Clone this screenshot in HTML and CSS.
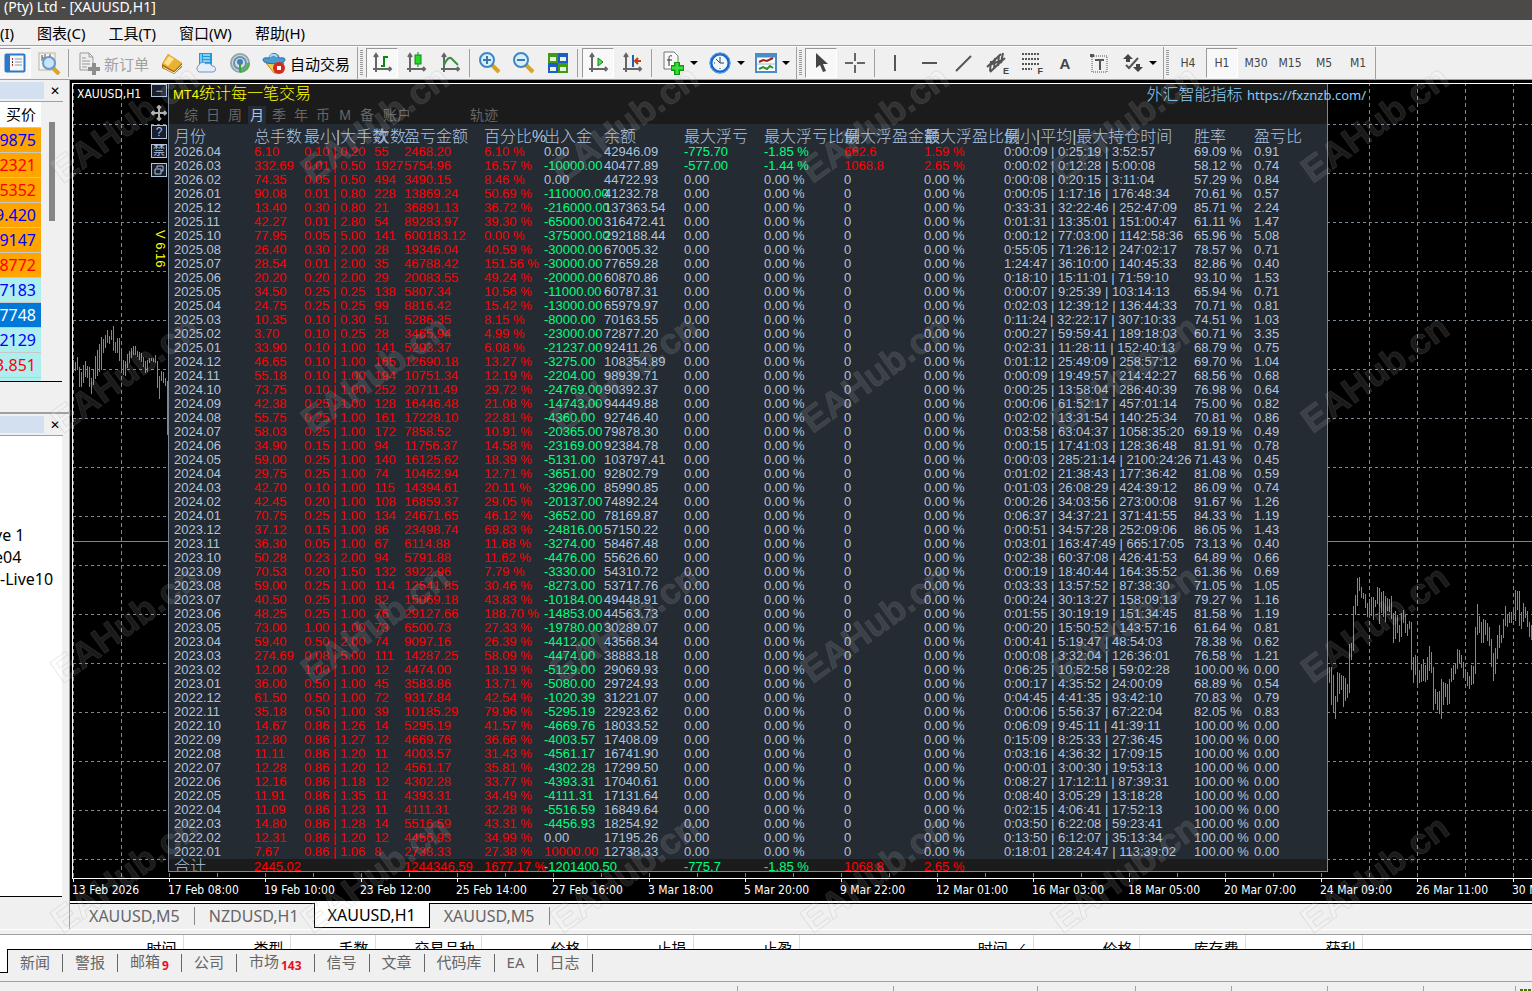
FILE: index.html
```html
<!DOCTYPE html>
<html lang="zh-CN">
<head>
  <meta charset="UTF-8" />
  <meta name="viewport" content="width=device-width, initial-scale=1.0"/>
  <title>(Pty) Ltd - [XAUUSD,H1]</title>
  <link rel="stylesheet" href="styles.css">
</head>
<body>

  <header class="titlebar">(Pty) Ltd - [XAUUSD,H1]</header>

  <nav class="menubar">
    <button>(I)</button>
    <button>图表(C)</button>
    <button>工具(T)</button>
    <button>窗口(W)</button>
    <button>帮助(H)</button>
  </nav>

  <div class="toolbar">
    <!-- standard -->
    <div class="group first">
      <button class="tool pressed" aria-label="导航"><svg width="22" height="22" viewBox="0 0 22 22"><rect x="1.500" y="2.500" width="19" height="17" rx="1" fill="#f4f9ff" stroke="#2f78c4" stroke-width="2"/><rect x="2" y="3" width="4" height="16" fill="#2f78c4"/><path d="M11 7h7M11 10h7M11 13h7" stroke="#999"/><path d="M8 7h1M8 13h1" stroke="#d22" stroke-width="2"/><path d="M8 10h1" stroke="#333" stroke-width="2"/></svg></button>
      <button class="tool" aria-label="数据窗口"><svg width="24" height="24" viewBox="0 0 24 24"><rect x="2" y="2" width="16" height="17" fill="#f6f4ee" stroke="#b9b19e"/><path d="M5 4v6M8 3v4M13 3v5M5 7h9" stroke="#555"/><path d="M16 17l6 6" stroke="#d9a521" stroke-width="4"/><circle cx="12" cy="12" r="6" fill="#c9e3fa" stroke="#6799c9" stroke-width="2"/></svg></button>
      <span class="sep"></span>
      <button class="tool wide order"><svg width="24" height="24" viewBox="0 0 24 24"><path d="M3 2h9l4 4v13H3z" fill="#eee" stroke="#999"/><path d="M12 2v4h4M5 7h4M5 10h8M5 13h8M5 16h5" stroke="#999" fill="none"/><path d="M17 12v12M11 18h12" stroke="#8d8d8d" stroke-width="4"/></svg>新订单</button>
      <button class="tool" aria-label="市场"><svg width="24" height="24" viewBox="0 0 24 24"><path d="M2 13L8 3l14 9v4l-8 7L2 17z" fill="#a66a05"/><path d="M2 13L8 3l14 9-8 8z" fill="#e9b233"/><path d="M4 12l5-7 5 3-6 7z" fill="#ffe391"/><path d="M3 16l11 6 8-8" stroke="#f6edd0" fill="none"/></svg></button>
      <button class="tool" aria-label="云主机"><svg width="24" height="24" viewBox="0 0 24 24"><path d="M5 2h13v13H5z" fill="#1d9ade"/><path d="M9 4h7M9 7h7M9 10h7" stroke="#fff"/><path d="M6 3h2v10H6z" fill="#73cbfa"/><path d="M5 21a4 4 0 0 1 0-7 4 4 0 0 1 7-1 4 4 0 0 1 6 2 3 3 0 0 1 1 6z" fill="#e4eefb" stroke="#7791bd"/></svg></button>
      <button class="tool" aria-label="信号"><svg width="24" height="24" viewBox="0 0 24 24"><circle cx="12" cy="12" r="9" fill="#d4dde0" stroke="#8fa6ae" stroke-width="2"/><circle cx="12" cy="12" r="6" fill="none" stroke="#6b91a7" stroke-width="2"/><path d="M12 22a10 10 0 0 0 10-10h-3a7 7 0 0 1-7 7z" fill="#54b051"/><circle cx="12" cy="11" r="3" fill="#3e7fc0"/><path d="M12 12v9" stroke="#3ca043" stroke-width="2"/></svg></button>
      <button class="tool wide auto"><svg width="24" height="24" viewBox="0 0 24 24"><path d="M4 12h18l-7 10h-3z" fill="#f2cc52" stroke="#b98d1b"/><path d="M1 9c0-3 4-2 6-2 0-6 10-6 10 0 3 0 6-1 6 2 0 5-22 5-22 0z" fill="#4c9bcc" stroke="#2b6f9e"/><path d="M8 6c1-3 6-3 7 0" stroke="#a7dbf4" stroke-width="2" fill="none"/><circle cx="17" cy="17" r="6" fill="#d52b1e"/><rect x="15" y="15" width="4" height="4" fill="#fff"/></svg>自动交易</button>
    </div>

    <!-- charts -->
    <div class="group">
      <button class="tool pressed" aria-label="柱状图"><svg width="22" height="22" viewBox="0 0 22 22"><path class="axis" d="M5 3v17M2 17h18M3 5l2-3 2 3M18 15l2 2-2 2"/><path d="M13 4v11M13 5h4M10 14h3" stroke="#0a8a12" stroke-width="2"/></svg></button>
      <button class="tool" aria-label="蜡烛图"><svg width="22" height="22" viewBox="0 0 22 22"><path class="axis" d="M5 3v17M2 17h18M3 5l2-3 2 3M18 15l2 2-2 2"/><path d="M13 0v15" stroke="#0a8a12"/><rect x="10" y="3" width="6" height="9" fill="#2bd32b" stroke="#0a8a12"/></svg></button>
      <button class="tool" aria-label="折线图"><svg width="22" height="22" viewBox="0 0 22 22"><path class="axis" d="M5 3v17M2 17h18M3 5l2-3 2 3M18 15l2 2-2 2"/><path d="M5 13c4-9 7-8 9-5l5 5" stroke="#3b9140" stroke-width="2" fill="none"/></svg></button>
      <span class="sep"></span>
      <button class="tool" aria-label="放大"><svg width="24" height="24" viewBox="0 0 24 24"><path d="M14 14l7 7" stroke="#d8a520" stroke-width="4"/><circle cx="9" cy="9" r="7" fill="#d8effc" stroke="#3f86c2" stroke-width="2"/><path d="M5 9h8M9 5v8" stroke="#3a78ae" stroke-width="2"/></svg></button>
      <button class="tool" aria-label="缩小"><svg width="24" height="24" viewBox="0 0 24 24"><path d="M14 14l7 7" stroke="#d8a520" stroke-width="4"/><circle cx="9" cy="9" r="7" fill="#d8effc" stroke="#3f86c2" stroke-width="2"/><path d="M5 9h8" stroke="#3a78ae" stroke-width="2"/></svg></button>
      <button class="tool" aria-label="平铺窗口"><svg width="22" height="22" viewBox="0 0 22 22"><path d="M1 1h10v10H1zM11 11h10v10H11z" fill="#3f9a17"/><path d="M11 1h10v10H11zM1 11h10v10H1z" fill="#1e5bc6"/><path d="M3 5h6v4H3zM13 5h6v4h-6zM3 15h6v4H3zM13 15h6v4h-6z" fill="#e8f4dc"/></svg></button>
      <span class="sep"></span>
      <button class="tool pressed" aria-label="自动滚动"><svg width="22" height="22" viewBox="0 0 22 22"><path class="axis" d="M5 3v17M2 17h18M3 5l2-3 2 3M18 15l2 2-2 2"/><path d="M11 6l5 4-5 4z" fill="#58d858" stroke="#0a8a12"/></svg></button>
      <button class="tool" aria-label="图表平移"><svg width="22" height="22" viewBox="0 0 22 22"><path class="axis" d="M5 3v17M2 17h18M3 5l2-3 2 3M18 15l2 2-2 2"/><path d="M12 3v12" stroke="#1a66a8" stroke-width="2"/><path d="M20 9h-6M17 6l-3 3 3 3" stroke="#c23c0e" stroke-width="2" fill="none"/></svg></button>
      <span class="sep"></span>
      <button class="tool drop" aria-label="技术指标"><svg width="24" height="24" viewBox="0 0 24 24"><path d="M3 1h10l4 4v13H3z" fill="#fafafa" stroke="#777"/><path d="M11 5c-3-1-3 1-3 3v7M6 9h5" stroke="#333" fill="none"/><path d="M16 11v13M10 17h13" stroke="#0c9a10" stroke-width="6"/><path d="M16 12v11M11 17h11" stroke="#3be03b" stroke-width="3"/></svg></button>
      <button class="tool drop" aria-label="时间周期"><svg width="24" height="24" viewBox="0 0 24 24"><circle cx="12" cy="12" r="9" fill="#eef7ff" stroke="#1b66c0" stroke-width="3"/><circle cx="12" cy="12" r="10" fill="none" stroke="#4fa2f0"/><path d="M12 6v6h4M12 17v1M6 12h1M8 8l4 4" stroke="#345" fill="none"/></svg></button>
      <button class="tool drop" aria-label="模板"><svg width="22" height="22" viewBox="0 0 22 22"><rect x="1" y="2" width="20" height="18" fill="#fff" stroke="#4a8cc9" stroke-width="2"/><path d="M1 4h20" stroke="#4a8cc9" stroke-width="3"/><path d="M4 10l4-2 4 1 6-3" stroke="#a32014" fill="none" stroke-width="2"/><path d="M2 12h18" stroke="#9bbbd8"/><path d="M4 17l4-2 4 2 3-3 3 2" stroke="#2d9130" fill="none" stroke-width="2"/></svg></button>
    </div>

    <!-- line studies -->
    <div class="group">
      <button class="tool pressed" aria-label="光标"><svg width="22" height="22" viewBox="0 0 22 22"><path d="M6 1v15l4-3 3 7 3-1-3-7h5z" fill="#444"/></svg></button>
      <button class="tool" aria-label="十字准线"><svg width="22" height="22" viewBox="0 0 22 22"><path d="M11 1v8M11 13v8M1 11h8M13 11h8" stroke="#666" stroke-width="2"/></svg></button>
      <span class="sep"></span>
      <button class="tool" aria-label="垂直线"><svg width="22" height="22" viewBox="0 0 22 22"><path d="M11 3v16" stroke="#555" stroke-width="2"/></svg></button>
      <button class="tool" aria-label="水平线"><svg width="22" height="22" viewBox="0 0 22 22"><path d="M4 11h15" stroke="#555" stroke-width="2"/></svg></button>
      <button class="tool" aria-label="趋势线"><svg width="22" height="22" viewBox="0 0 22 22"><path d="M4 19L19 4" stroke="#555" stroke-width="2"/></svg></button>
      <button class="tool letter" aria-label="等距通道"><svg width="22" height="22" viewBox="0 0 22 22"><path d="M1 15L15 2M4 20L19 6M5 9l-1 10M9 6L8 17M13 3l-1 11M17 1l-2 10M3 13l14-5" stroke="#555" stroke-width="2"/></svg><small>E</small></button>
      <button class="tool letter" aria-label="斐波那契"><svg width="22" height="22" viewBox="0 0 22 22"><path d="M2 2h18M2 7h18M2 12h18M2 17h10" stroke="#555" stroke-width="2" stroke-dasharray="2 1"/></svg><small>F</small></button>
      <button class="tool big">A</button>
      <button class="tool" aria-label="文字标签"><svg width="22" height="22" viewBox="0 0 22 22"><rect x="4" y="4" width="15" height="16" fill="none" stroke="#555" stroke-dasharray="1 1"/><path d="M2 2h4v3H2z" fill="#555"/><path d="M7 8h9M12 8v10" stroke="#555" stroke-width="2"/></svg></button>
      <button class="tool drop" aria-label="箭头"><svg width="22" height="22" viewBox="0 0 22 22"><path d="M6 2l5 5H8v3H4V7H1zM16 20l-5-5h3v-3h4v3h3z" fill="#444"/><path d="M4 13l3 3 9-10" stroke="#555" stroke-width="2" fill="none"/></svg></button>
    </div>

    <!-- periods -->
    <div class="group">
      <button class="tool">H4</button>
      <button class="tool pressed">H1</button>
      <button class="tool">M30</button>
      <button class="tool">M15</button>
      <button class="tool">M5</button>
      <button class="tool">M1</button>
    </div>
  </div>

  <main class="workspace">
    <aside class="sidebar">
      <section class="watch">
        <div class="dock-head"><span></span><button aria-label="关闭">✕</button></div>
        <div class="watch-body">
          <table class="quotes">
            <thead><tr><th>买价</th></tr></thead>
            <tbody>
              <tr class="orange up"><td>9875</td></tr>
              <tr class="orange down"><td>2321</td></tr>
              <tr class="orange down"><td>5352</td></tr>
              <tr class="orange up"><td>9.420</td></tr>
              <tr class="orange up"><td>9147</td></tr>
              <tr class="orange down"><td>8772</td></tr>
              <tr class="aqua up"><td>7183</td></tr>
              <tr class="selected"><td>7748</td></tr>
              <tr class="aqua up"><td>2129</td></tr>
              <tr class="aqua down"><td>3.851</td></tr>
              <tr class="aqua"><td></td></tr>
            </tbody>
          </table>
          <div class="scroll-thumb"></div>
        </div>
      </section>
      <section class="navigator">
        <div class="dock-head"><span></span><button aria-label="关闭">✕</button></div>
        <ul class="accounts">
          <li>ve 1</li>
          <li>e04</li>
          <li>-Live10</li>
        </ul>
      </section>
    </aside>

    <section class="chart-side">
      <div class="chart">
        <div class="plot">
          <svg class="plot-svg" aria-hidden="true">
            <defs>
              <pattern id="grid" x="0" y="40" width="48" height="49" patternUnits="userSpaceOnUse">
                <path d="M0 0h3v1H0zM6 0h3v1H6zM12 0h3v1h-3zM18 0h3v1h-3zM24 0h3v1h-3zM30 0h3v1h-3zM36 0h3v1h-3zM42 0h3v1h-3z" fill="#778899"/>
                <path d="M0 0v4h1V0zM0 7v4h1V7zM0 14v4h1v-4zM0 21v4h1v-4zM0 28v4h1v-4zM0 35v4h1v-4zM0 42v4h1v-4z" fill="#778899"/>
              </pattern>
            </defs>
            <rect width="100%" height="100%" fill="url(#grid)"/>
            <rect y="457" width="100%" height="1" fill="#778899"/>
            <path id="bars" stroke="#00e600" shape-rendering="crispEdges"/>
          </svg>
          <span class="symbol">XAUUSD,H1</span>

          <div class="side-buttons">
            <button>−</button>
            <button class="move" aria-label="移动"><svg width="16" height="16" viewBox="0 0 16 16"><path d="M8 1v14M1 8h14M6 3l2-2 2 2M6 13l2 2 2-2M3 6L1 8l2 2M13 6l2 2-2 2" stroke="#b0b0b0" stroke-width="2" fill="none"/></svg></button>
            <button>?</button>
            <button>禁</button>
            <button aria-label="窗口"><svg width="10" height="10" viewBox="0 0 10 10"><path d="M3 3V1h6v5H7M1 4h6v5H1z" stroke="#b0c4de" fill="none"/></svg></button>
          </div>
          <span class="version">V 6.16</span>

          <div class="panel">
            <div class="panel-head">
              <h1><span>MT4</span>统计每一笔交易</h1>
              <div class="modes">
                <button>综</button><button>日</button><button>周</button><button class="active">月</button><button>季</button><button>年</button><button>币</button><button>M</button><button>备</button><button class="account">账户</button><button class="track">轨迹</button>
              </div>
            </div>
            <table class="stats">
              <colgroup>
                <col class="w85"><col class="w50"><col class="w70"><col class="w30"><col class="w80">
                <col class="w60"><col class="w60"><col class="w80"><col class="w80"><col class="w80">
                <col class="w80"><col class="w80"><col class="w190"><col class="w60"><col>
              </colgroup>
              <thead>
                <tr>
                  <th>月份</th><th>总手数</th><th>最小|大手数</th><th>次数</th><th>盈亏金额</th>
                  <th>百分比%</th><th>出入金</th><th>余额</th><th>最大浮亏</th><th>最大浮亏比例</th>
                  <th>最大浮盈金额</th><th>最大浮盈比例</th><th>最小|平均|最大持仓时间</th><th>胜率</th><th>盈亏比</th>
                </tr>
              </thead>
              <tbody id="rows"></tbody>
              <tfoot>
                <tr>
                  <th>合计</th><td class="red">2445.02</td><td></td><td></td><td class="red">1244346.59</td>
                  <td class="red">1677.17 %</td><td class="green">-1201400.50</td><td></td><td class="green">-775.7</td><td class="green">-1.85 %</td>
                  <td class="red">1068.8</td><td class="red">2.65 %</td><td></td><td></td><td></td>
                </tr>
              </tfoot>
            </table>
          </div>
          <div class="brand">外汇智能指标 <a href="https://fxznzb.com/">https://fxznzb.com/</a></div>
        </div>
        <div class="time-axis">
          <span>13 Feb 2026</span><span>17 Feb 08:00</span><span>19 Feb 10:00</span><span>23 Feb 12:00</span>
          <span>25 Feb 14:00</span><span>27 Feb 16:00</span><span>3 Mar 18:00</span><span>5 Mar 20:00</span>
          <span>9 Mar 22:00</span><span>12 Mar 01:00</span><span>16 Mar 03:00</span><span>18 Mar 05:00</span>
          <span>20 Mar 07:00</span><span>24 Mar 09:00</span><span>26 Mar 11:00</span><span>30 Mar 13:00</span>
        </div>
      </div>
      <nav class="chart-tabs">
        <button>XAUUSD,M5</button>
        <button>NZDUSD,H1</button>
        <button class="active">XAUUSD,H1</button>
        <button>XAUUSD,M5</button>
      </nav>
    </section>
  </main>

  <section class="terminal">
    <div class="orders-clip">
      <table class="orders">
        <thead>
          <tr>
            <th class="c182">时间</th><th class="c107">类型</th><th class="c85">手数</th><th class="c106">交易品种</th>
            <th class="c106">价格</th><th class="c106">止损</th><th class="c106">止盈</th><th class="c234 sorted">时间 <i>⁄</i></th>
            <th class="c106">价格</th><th class="c106">库存费</th><th class="c117">获利</th><th></th>
          </tr>
        </thead>
      </table>
    </div>
    <nav class="terminal-tabs">
      <button class="current" aria-label="交易"></button>
      <button>新闻</button>
      <button>警报</button>
      <button>邮箱<b>9</b></button>
      <button>公司</button>
      <button>市场<b>143</b></button>
      <button>信号</button>
      <button>文章</button>
      <button>代码库</button>
      <button>EA</button>
      <button>日志</button>
    </nav>
  </section>

  <footer class="statusbar">
    <span></span><span></span><span></span><span></span><span></span><span></span><span></span><span></span><i></i>
  </footer>

  <svg class="watermark" aria-hidden="true">
    <defs>
      <pattern id="mark" width="250" height="250" patternUnits="userSpaceOnUse">
        <text x="125" y="136" text-anchor="middle" transform="rotate(-36 125 124)">EAHub.cn</text>
      </pattern>
    </defs>
    <rect width="100%" height="100%" fill="url(#mark)"/>
  </svg>

  <script>
    // month, lots, min, max, trades, profit, percent, in/out, balance, hold min, avg, max, win rate, ratio
    const months = `
2026.04 6.10 0.10 0.20 55 2468.20 6.10 0.00 42946.09 0:00:09 0:25:19 3:52:57 69.09 0.91
2026.03 332.69 0.01 0.50 1927 5754.96 16.57 -10000.00 40477.89 0:00:02 0:12:28 5:00:08 58.12 0.74
2026.02 74.35 0.05 0.50 494 3490.15 8.46 0.00 44722.93 0:00:08 0:20:15 3:11:04 57.29 0.84
2026.01 90.08 0.01 0.80 228 13869.24 50.69 -110000.00 41232.78 0:00:05 1:17:16 176:48:34 70.61 0.57
2025.12 13.40 0.30 0.80 21 36891.13 36.72 -216000.00 137363.54 0:33:31 32:22:46 252:47:09 85.71 2.24
2025.11 42.27 0.01 2.80 54 89283.97 39.30 -65000.00 316472.41 0:01:31 13:35:01 151:00:47 61.11 1.47
2025.10 77.95 0.05 5.00 141 600183.12 0.00 -375000.00 292188.44 0:00:12 77:03:00 1142:58:36 65.96 5.08
2025.08 26.40 0.30 2.00 28 19346.04 40.59 -30000.00 67005.32 0:55:05 71:26:12 247:02:17 78.57 0.71
2025.07 28.54 0.01 2.00 35 46788.42 151.56 -30000.00 77659.28 1:24:47 36:10:00 140:45:33 82.86 0.40
2025.06 20.20 0.20 2.00 29 20083.55 49.24 -20000.00 60870.86 0:18:10 15:11:01 71:59:10 93.10 1.53
2025.05 34.50 0.25 0.25 138 5807.34 10.56 -11000.00 60787.31 0:00:07 9:25:39 103:14:13 65.94 0.71
2025.04 24.75 0.25 0.25 99 8816.42 15.42 -13000.00 65979.97 0:02:03 12:39:12 136:44:33 70.71 0.81
2025.03 10.35 0.10 0.30 51 5286.35 8.15 -8000.00 70163.55 0:11:24 32:22:17 307:10:33 74.51 1.03
2025.02 3.70 0.10 0.25 28 3465.94 4.99 -23000.00 72877.20 0:00:27 59:59:41 189:18:03 60.71 3.35
2025.01 33.90 0.10 1.00 141 5293.37 6.08 -21237.00 92411.26 0:02:31 11:28:11 152:40:13 68.79 0.75
2024.12 46.65 0.10 1.00 165 12690.18 13.27 -3275.00 108354.89 0:01:12 25:49:09 258:57:12 69.70 1.04
2024.11 55.18 0.10 1.00 194 10751.34 12.19 -2204.00 98939.71 0:00:09 19:49:57 214:42:27 68.56 0.68
2024.10 73.75 0.10 1.00 252 20711.49 29.72 -24769.00 90392.37 0:00:25 13:58:04 286:40:39 76.98 0.64
2024.09 42.38 0.25 1.00 128 16446.48 21.08 -14743.00 94449.88 0:00:06 61:52:17 457:01:14 75.00 0.82
2024.08 55.75 0.25 1.00 161 17228.10 22.81 -4360.00 92746.40 0:02:02 13:31:54 140:25:34 70.81 0.86
2024.07 58.03 0.25 1.00 172 7858.52 10.91 -20365.00 79878.30 0:03:58 63:04:37 1058:35:20 69.19 0.49
2024.06 34.90 0.15 1.00 94 11756.37 14.58 -23169.00 92384.78 0:00:15 17:41:03 128:36:48 81.91 0.78
2024.05 59.00 0.25 1.00 140 16125.62 18.39 -5131.00 103797.41 0:00:03 285:21:14 2100:24:26 71.43 0.45
2024.04 29.75 0.25 1.00 74 10462.94 12.71 -3651.00 92802.79 0:01:02 21:38:43 177:36:42 81.08 0.59
2024.03 42.70 0.10 1.00 115 14394.61 20.11 -3296.00 85990.85 0:01:03 26:08:29 424:39:12 86.09 0.74
2024.02 42.45 0.20 1.00 108 16859.37 29.05 -20137.00 74892.24 0:00:26 34:03:56 273:00:08 91.67 1.26
2024.01 70.75 0.25 1.00 134 24671.65 46.12 -3652.00 78169.87 0:06:37 34:37:21 371:41:55 84.33 1.19
2023.12 37.12 0.15 1.00 86 23498.74 69.83 -24816.00 57150.22 0:00:51 34:57:28 252:09:06 86.05 1.43
2023.11 36.30 0.05 1.00 67 6114.88 11.68 -3274.00 58467.48 0:03:01 163:47:49 665:17:05 73.13 0.40
2023.10 50.28 0.23 2.00 94 5791.88 11.62 -4476.00 55626.60 0:02:38 60:37:08 426:41:53 64.89 0.66
2023.09 70.53 0.20 1.50 132 3922.96 7.79 -3330.00 54310.72 0:00:19 18:40:44 164:35:52 61.36 0.69
2023.08 59.00 0.25 1.00 114 12541.85 30.46 -8273.00 53717.76 0:03:33 13:57:52 87:38:30 71.05 1.05
2023.07 40.50 0.25 1.00 82 15069.18 43.83 -10184.00 49448.91 0:00:24 30:13:27 158:09:13 79.27 1.16
2023.06 48.25 0.25 1.00 76 29127.66 188.70 -14853.00 44563.73 0:01:55 30:19:19 151:34:45 81.58 1.19
2023.05 73.00 1.00 1.00 73 6500.73 27.33 -19780.00 30289.07 0:00:20 15:50:52 143:57:16 61.64 0.81
2023.04 59.40 0.50 2.00 74 9097.16 26.39 -4412.00 43568.34 0:00:41 5:19:47 48:54:03 78.38 0.62
2023.03 274.69 0.08 5.00 111 14287.25 58.09 -4474.00 38883.18 0:00:08 3:32:04 126:36:01 76.58 1.21
2023.02 12.00 1.00 1.00 12 4474.00 18.19 -5129.00 29069.93 0:06:25 10:52:58 59:02:28 100.00 0.00
2023.01 36.00 0.50 1.00 45 3583.86 13.71 -5080.00 29724.93 0:00:17 4:35:52 24:00:09 68.89 0.54
2022.12 61.50 0.50 1.00 72 9317.84 42.54 -1020.39 31221.07 0:04:45 4:41:35 93:42:10 70.83 0.79
2022.11 35.18 0.50 1.00 39 10185.29 79.96 -5295.19 22923.62 0:00:06 5:56:37 67:22:04 82.05 0.83
2022.10 14.67 0.86 1.26 14 5295.19 41.57 -4669.76 18033.52 0:06:09 9:45:11 41:39:11 100.00 0.00
2022.09 12.80 0.86 1.27 12 4669.76 36.66 -4003.57 17408.09 0:15:09 8:25:33 27:36:45 100.00 0.00
2022.08 11.11 0.86 1.20 11 4003.57 31.43 -4561.17 16741.90 0:03:16 4:36:32 17:09:15 100.00 0.00
2022.07 12.28 0.86 1.20 12 4561.17 35.81 -4302.28 17299.50 0:00:01 3:00:30 19:53:13 100.00 0.00
2022.06 12.16 0.86 1.18 12 4302.28 33.77 -4393.31 17040.61 0:08:27 17:12:11 87:39:31 100.00 0.00
2022.05 11.91 0.86 1.35 11 4393.31 34.49 -4111.31 17131.64 0:08:40 3:05:29 13:18:28 100.00 0.00
2022.04 11.09 0.86 1.23 11 4111.31 32.28 -5516.59 16849.64 0:02:15 4:06:41 17:52:13 100.00 0.00
2022.03 14.80 0.86 1.28 14 5516.59 43.31 -4456.93 18254.92 0:03:50 6:22:08 59:23:41 100.00 0.00
2022.02 12.31 0.86 1.20 12 4456.93 34.99 0.00 17195.26 0:13:50 6:12:07 35:13:34 100.00 0.00
2022.01 7.67 0.86 1.06 8 2738.33 27.38 10000.00 12738.33 0:18:01 28:24:47 113:39:02 100.00 0.00`;

    // floating loss, loss %, floating profit, profit %
    const floating = {
      '2026.04': ['-775.70', '-1.85 %', '662.6', '1.59 %'],
      '2026.03': ['-577.00', '-1.44 %', '1068.8', '2.65 %']
    };

    function color(value) {
      const n = parseFloat(value);
      if (n > 0) return 'red';
      return n < 0 ? 'green' : '';
    }

    const cell = (text, cls = '') => `<td class="${cls}">${text}</td>`;

    document.getElementById('rows').innerHTML = months.trim().split('\n').map(line => {
      const [month, lots, min, max, count, profit, pct, flow, balance, h1, h2, h3, win, ratio] = line.split(' ');
      const extra = floating[month] || ['0.00', '0.00 %', '0', '0.00 %'];
      return '<tr>' + cell(month) + cell(lots, 'red') + cell(`${min} | ${max}`, 'red') + cell(count, 'red') +
        cell(profit, 'red') + cell(pct + ' %', 'red') + cell(flow, color(flow)) + cell(balance) +
        extra.map(v => cell(v, color(v))).join('') +
        cell(`${h1} | ${h2} | ${h3}`) + cell(win + ' %') + cell(ratio) + '</tr>';
    }).join('');

    // high/low pairs, 3 points to a pixel
    const left = [540,575,546,572,531,570,562,621,577,620,556,610,543,592,558,594,560,620,595,641,570,615,528,598,
      510,588,492,575,472,570,477,518,464,505,450,490,468,492,450,480,438,512,487,518,473,518,475,542,513,566,
      540,585,543,588,522,565,512,548,504,535,498,525,498,525,513,530,515,540,520,545,530,562,543,580,540,575,
      534,550,535,543,533,545,525,550,543,625,588,656,574,603,576,610,594,617,603,765];
    const right = [381,430,381,495,405,518,468,536,396,486,399,462,405,450,408,500,414,482,432,474,312,459,309,360,
      198,333,165,224,114,198,111,153,141,174,159,177,162,204,189,231,177,225,171,228,171,240,180,201,141,192,
      144,252,156,219,153,231,168,246,174,213,177,216,168,237,219,309,213,297,225,279,255,306,219,291,210,249,
      225,279,252,288,243,267,246,390,351,430,345,405,354,436,390,430,372,426,357,423,375,426,351,420,318,393,
      336,399,381,510,447,492,456,510,453,522,417,536,426,495,429,471,432,495,417,492,384,426,375,420,369,402,
      327,387,330,369,345,384,366,414,387,420,396,438,408,447,375,435,378,432,261,402,192,285,228,279,246,309,
      237,309,240,285,249,303,261,318,297,381,339,423,324,402,285,357,255,324,285,309,237,294,198,258,225,261,
      216,249,216,249,213,240,150,243,153,210,153,258,216,267,189,246,201,234,213,261,246,291,255,300];

    function bars(points, x, base) {
      let d = '';
      for (let i = 0; i < points.length; i += 2) {
        d += `M${x + i + 0.5} ${base + Math.round(points[i] / 3)}V${base + Math.round(points[i + 1] / 3)}`;
      }
      return d;
    }

    document.getElementById('bars').setAttribute('d', bars(left, 0, 96) + bars(right, 1256, 456));
  </script>

</body>
</html>
```
FILE: styles.css
```css
* {
  box-sizing: border-box;
  margin: 0;
  padding: 0;
}

body {
  display: flex;
  flex-direction: column;
  min-height: 100vh;
  overflow: hidden;
  background: #f0f0f0;
  color: #000;
  font: 15px/20px "Noto Sans", "Noto Sans CJK SC", sans-serif;
}

button {
  background: none;
  border: none;
  color: inherit;
  font: inherit;
  white-space: nowrap;
}

.titlebar {
  height: 20px;
  padding-left: 4px;
  background: #4b4a48;
  color: #fff;
  font-size: 14px;
  line-height: 13px;
}

.menubar {
  display: flex;
  gap: 23px;
  height: 26px;
  border-bottom: 1px solid #a0a0a0;
  line-height: 24px;
}

/* toolbar */
.toolbar {
  display: flex;
  height: 34px;
  border-top: 1px solid #fff;
  border-bottom: 1px solid #a0a0a0;
}

.group {
  position: relative;
  display: flex;
  align-items: center;
  padding-left: 7px;
  border-right: 1px solid #a0a0a0;
}

.group::before {
  content: "";
  position: absolute;
  left: 2px;
  top: 3px;
  bottom: 3px;
  width: 3px;
  background: repeating-linear-gradient(#999 0 1px, #f0f0f0 1px 2px);
}

.group.first {
  width: 360px;
  margin-left: -2px;
  padding-left: 0;
}

.group.first::before {
  display: none;
}

.tool {
  display: flex;
  align-items: center;
  justify-content: center;
  width: 32px;
  height: 30px;
  margin: 0 1px;
  color: #444;
  font: 12px "DejaVu Sans Condensed", sans-serif;
}

.tool svg {
  flex: none;
}

.tool.pressed {
  border: 1px solid #fff;
  border-top-color: #999;
  border-left-color: #999;
  background: #f8f8f8;
}

.tool.wide {
  width: auto;
  gap: 3px;
  font: 15px "Noto Sans CJK SC", sans-serif;
}

.tool.order {
  margin: 0 6px 0 5px;
  color: #a0a0a0;
}

.tool.auto {
  gap: 4px;
  margin-left: 5px;
  color: #000;
}

.tool.big {
  font: bold 15px "Liberation Sans", sans-serif;
}

.tool.drop {
  justify-content: flex-start;
  gap: 5px;
  width: 45px;
  padding-left: 5px;
}

.tool.drop::after {
  content: "";
  border: 4px solid transparent;
  border-top-color: #000;
  border-bottom: 0;
}

.tool.letter {
  position: relative;
}

.tool.letter small {
  position: absolute;
  right: 4px;
  bottom: 2px;
  background: #f0f0f0;
  font: bold 9px/9px "Liberation Sans", sans-serif;
}

.axis {
  fill: none;
  stroke: #666;
  stroke-width: 2;
}

.sep {
  width: 1px;
  height: 28px;
  margin: 0 3px 0 2px;
  background: #a0a0a0;
}

/* sidebar */
.workspace {
  display: flex;
  flex: 1;
}

.sidebar {
  display: flex;
  flex-direction: column;
  width: 70px;
  border-right: 1px solid #a0a0a0;
}

.dock-head {
  display: flex;
  align-items: center;
  gap: 6px;
  height: 22px;
  width: 63px;
  border-bottom: 1px solid #a0a0a0;
}

.dock-head span {
  width: 44px;
  height: 17px;
  background: #d3e0ef;
}

.dock-head button {
  font: bold 12px/12px "DejaVu Sans", sans-serif;
}

.watch {
  height: 334px;
  border-bottom: 2px solid #a0a0a0;
}

.watch-body {
  display: flex;
  width: 62px;
  height: 280px;
  overflow: hidden;
  border-bottom: 1px solid #000;
}

.quotes {
  width: 41px;
  border-collapse: collapse;
  table-layout: fixed;
}

.quotes th,
.quotes td {
  height: 25px;
  padding-right: 5px;
  border-bottom: 1px solid #c8c8c8;
  line-height: 22px;
  text-align: right;
  white-space: nowrap;
}

.quotes th {
  background: #fff;
  font-weight: normal;
}

/* long prices lose their leading digits, not the last ones */
.quotes td {
  direction: rtl;
  font-size: 16px;
}

.orange { background: #ffa500; }
.aqua { background: #afeeee; }
.up { color: #0000ff; }
.down { color: #ff0000; }
.selected { background: #0078d7; color: #fff; }

.scroll-thumb {
  width: 6px;
  height: 99px;
  margin: 20px 0 0 8px;
  background: #868686;
}

.navigator {
  display: flex;
  flex: 1;
  flex-direction: column;
}

.accounts {
  flex: 1;
  width: 62px;
  margin-bottom: 32px;
  padding-top: 88px;
  border-bottom: 1px solid #000;
  background: #fff;
  list-style: none;
  font-size: 16px;
  line-height: 22px;
}

.accounts li {
  height: 22px;
  white-space: nowrap;
}

.accounts li:nth-child(1) { text-indent: -6px; }
.accounts li:nth-child(2) { text-indent: -6px; }

/* chart */
.chart-side {
  display: flex;
  flex: 1;
  flex-direction: column;
  min-width: 0;
}

.chart {
  display: flex;
  flex: 1;
  flex-direction: column;
  overflow: hidden;
  border-top: 3px solid #000;
  border-left: 2px solid #000;
  background: #000;
}

.plot {
  position: relative;
  flex: 1;
  border-top: 1px solid #fff;
  border-left: 1px solid #fff;
  border-bottom: 1px solid #fff;
  color: #b0c4de;
  font: 13px/14px "Liberation Sans", "Noto Sans CJK SC", sans-serif;
}

.plot-svg {
  position: absolute;
  width: 100%;
  height: 100%;
}

.symbol {
  position: absolute;
  left: 4px;
  top: 3px;
  color: #fff;
  font: 12px/14px "DejaVu Sans Condensed", sans-serif;
}

.side-buttons {
  position: absolute;
  left: 78px;
  top: 0;
  display: flex;
  flex-direction: column;
  gap: 5px;
}

.side-buttons button {
  display: flex;
  align-items: center;
  justify-content: center;
  width: 16px;
  height: 14px;
  border: 1px solid #b0c4de;
  background: #1b1e2c;
  font-size: 12px;
  line-height: 12px;
}

.side-buttons button:first-child {
  height: 13px;
  margin-bottom: 4px;
}

.side-buttons .move {
  border: none;
  background: none;
}

.version {
  position: absolute;
  left: 80px;
  top: 146px;
  color: #ffff00;
  writing-mode: vertical-rl;
}

.panel {
  position: absolute;
  left: 95px;
  top: 0;
  bottom: 6px;
  overflow: hidden;
  border: 1px solid #778899;
  border-top: none;
  background: #1b1b1b;
}

.panel-head {
  height: 40px;
  padding-left: 4px;
}

.panel-head h1 {
  height: 22px;
  color: #ffff00;
  font-size: 16px;
  font-weight: 300;
  line-height: 20px;
}

.panel-head h1 span {
  font-size: 13px;
}

.modes {
  display: flex;
  padding-left: 9px;
  color: #666;
  line-height: 18px;
}

.modes button {
  width: 18px;
  height: 18px;
  margin-right: 4px;
  font-size: 14px;
}

.modes .active {
  background: #252b38;
  color: #b0c4de;
}

.modes .account {
  width: 30px;
  margin-left: 2px;
}

.modes .track {
  width: 30px;
  margin-left: 53px;
}

.stats {
  width: 1158px;
  border-collapse: collapse;
  table-layout: fixed;
}

.stats thead,
.stats tbody {
  background: #252b33;
}

.stats th,
.stats td {
  height: 14px;
  text-align: left;
  white-space: nowrap;
}

.stats th:first-child,
.stats td:first-child {
  padding-left: 5px;
}

.stats th {
  font-size: 16px;
  font-weight: 300;
}

.stats thead th {
  height: 21px;
  padding-top: 4px;
}

.stats tfoot th,
.stats tfoot td {
  height: 16px;
  line-height: 16px;
}

.w30 { width: 30px; }
.w50 { width: 50px; }
.w60 { width: 60px; }
.w70 { width: 70px; }
.w80 { width: 80px; }
.w85 { width: 85px; }
.w190 { width: 190px; }

.red { color: #ff0000; }
.green { color: #00ff7f; }

.brand {
  position: absolute;
  right: 166px;
  top: 1px;
  color: #87cefa;
  font-size: 16px;
  font-weight: 300;
  line-height: 20px;
}

.brand a {
  color: inherit;
  font: 13px/20px "Noto Sans", sans-serif;
  text-decoration: none;
}

.time-axis {
  display: flex;
  flex: none;
  height: 22px;
  background: repeating-linear-gradient(to right, transparent 0 1px, #fff 1px 2px, transparent 2px 96px) 0 0 / 100% 3px no-repeat;
  color: #fff;
  font: 12px/22px "DejaVu Sans Condensed", sans-serif;
}

.time-axis span {
  flex: none;
  width: 96px;
  white-space: nowrap;
}

.chart-tabs {
  display: flex;
  height: 28px;
  padding-bottom: 1px;
  border-top: 2px solid #fff;
  color: #666;
}

.chart-tabs::after {
  content: "";
  flex: 1;
  border-top: 1px solid #000;
}

.chart-tabs button {
  padding: 0 15px 0 14px;
  border-top: 1px solid #000;
  background: linear-gradient(#888, #888) right 50% / 1px 18px no-repeat;
  font-size: 16px;
}

.chart-tabs button:first-child {
  padding-left: 19px;
}

.chart-tabs button:nth-child(2) {
  background: none;
}

.chart-tabs .active {
  padding: 0 13px;
  border: 1px solid #000;
  border-top: none;
  background: #fff;
  color: #000;
}

/* terminal */
.terminal {
  height: 52px;
  border-top: 1px solid #fff;
}

.orders-clip {
  height: 15px;
  margin-top: 4px;
  overflow: hidden;
  border-top: 1px solid #a0a0a0;
  background: #fff;
}

.orders {
  width: 100%;
  border-collapse: collapse;
  table-layout: fixed;
}

.orders th {
  padding: 3px 6px 0 0;
  border-right: 1px solid #ddd;
  font-weight: normal;
  text-align: right;
  white-space: nowrap;
}

.orders .sorted i {
  margin: 0 5px 0 8px;
}

.c85 { width: 85px; }
.c106 { width: 106px; }
.c107 { width: 107px; }
.c117 { width: 117px; }
.c182 { width: 183px; }
.c234 { width: 234px; }

.terminal-tabs {
  display: flex;
  border-top: 1px solid #000;
  color: #666;
}

.terminal-tabs button {
  height: 23px;
  padding: 0 13px 0 12px;
  background: linear-gradient(#666, #666) right 70% / 1px 18px no-repeat;
}

.terminal-tabs .current {
  width: 8px;
  height: 24px;
  margin-top: -1px;
  padding: 0;
  border: 1px solid #000;
  border-width: 0 1px 1px 0;
  background: #fff;
}

.terminal-tabs b {
  margin-left: 2px;
  color: #e81123;
  font: bold 12px/12px "Noto Sans", sans-serif;
  vertical-align: -3px;
}

.statusbar {
  display: flex;
  justify-content: flex-end;
  height: 10px;
  padding-top: 4px;
  border-top: 1px solid #a0a0a0;
}

.statusbar span {
  width: 96px;
  border-left: 1px solid #a0a0a0;
}

.statusbar span:nth-child(1) { width: 156px; }
.statusbar span:nth-child(2) { width: 144px; }
.statusbar span:nth-child(3) { width: 98px; }
.statusbar span:nth-child(7) { width: 92px; }
.statusbar span:nth-child(8) { width: 5px; }

.statusbar i {
  width: 12px;
  height: 3px;
  margin-top: 3px;
  background: repeating-linear-gradient(to right, #4f7000 0 3px, #f0f0f0 3px 4px);
}

.watermark {
  position: absolute;
  left: 0;
  top: 0;
  width: 100%;
  height: 100%;
  pointer-events: none;
}

.watermark text {
  fill: rgba(255, 255, 255, 0.1);
  stroke: rgba(128, 128, 128, 0.16);
  font: bold 36px "Liberation Sans", sans-serif;
}
```
